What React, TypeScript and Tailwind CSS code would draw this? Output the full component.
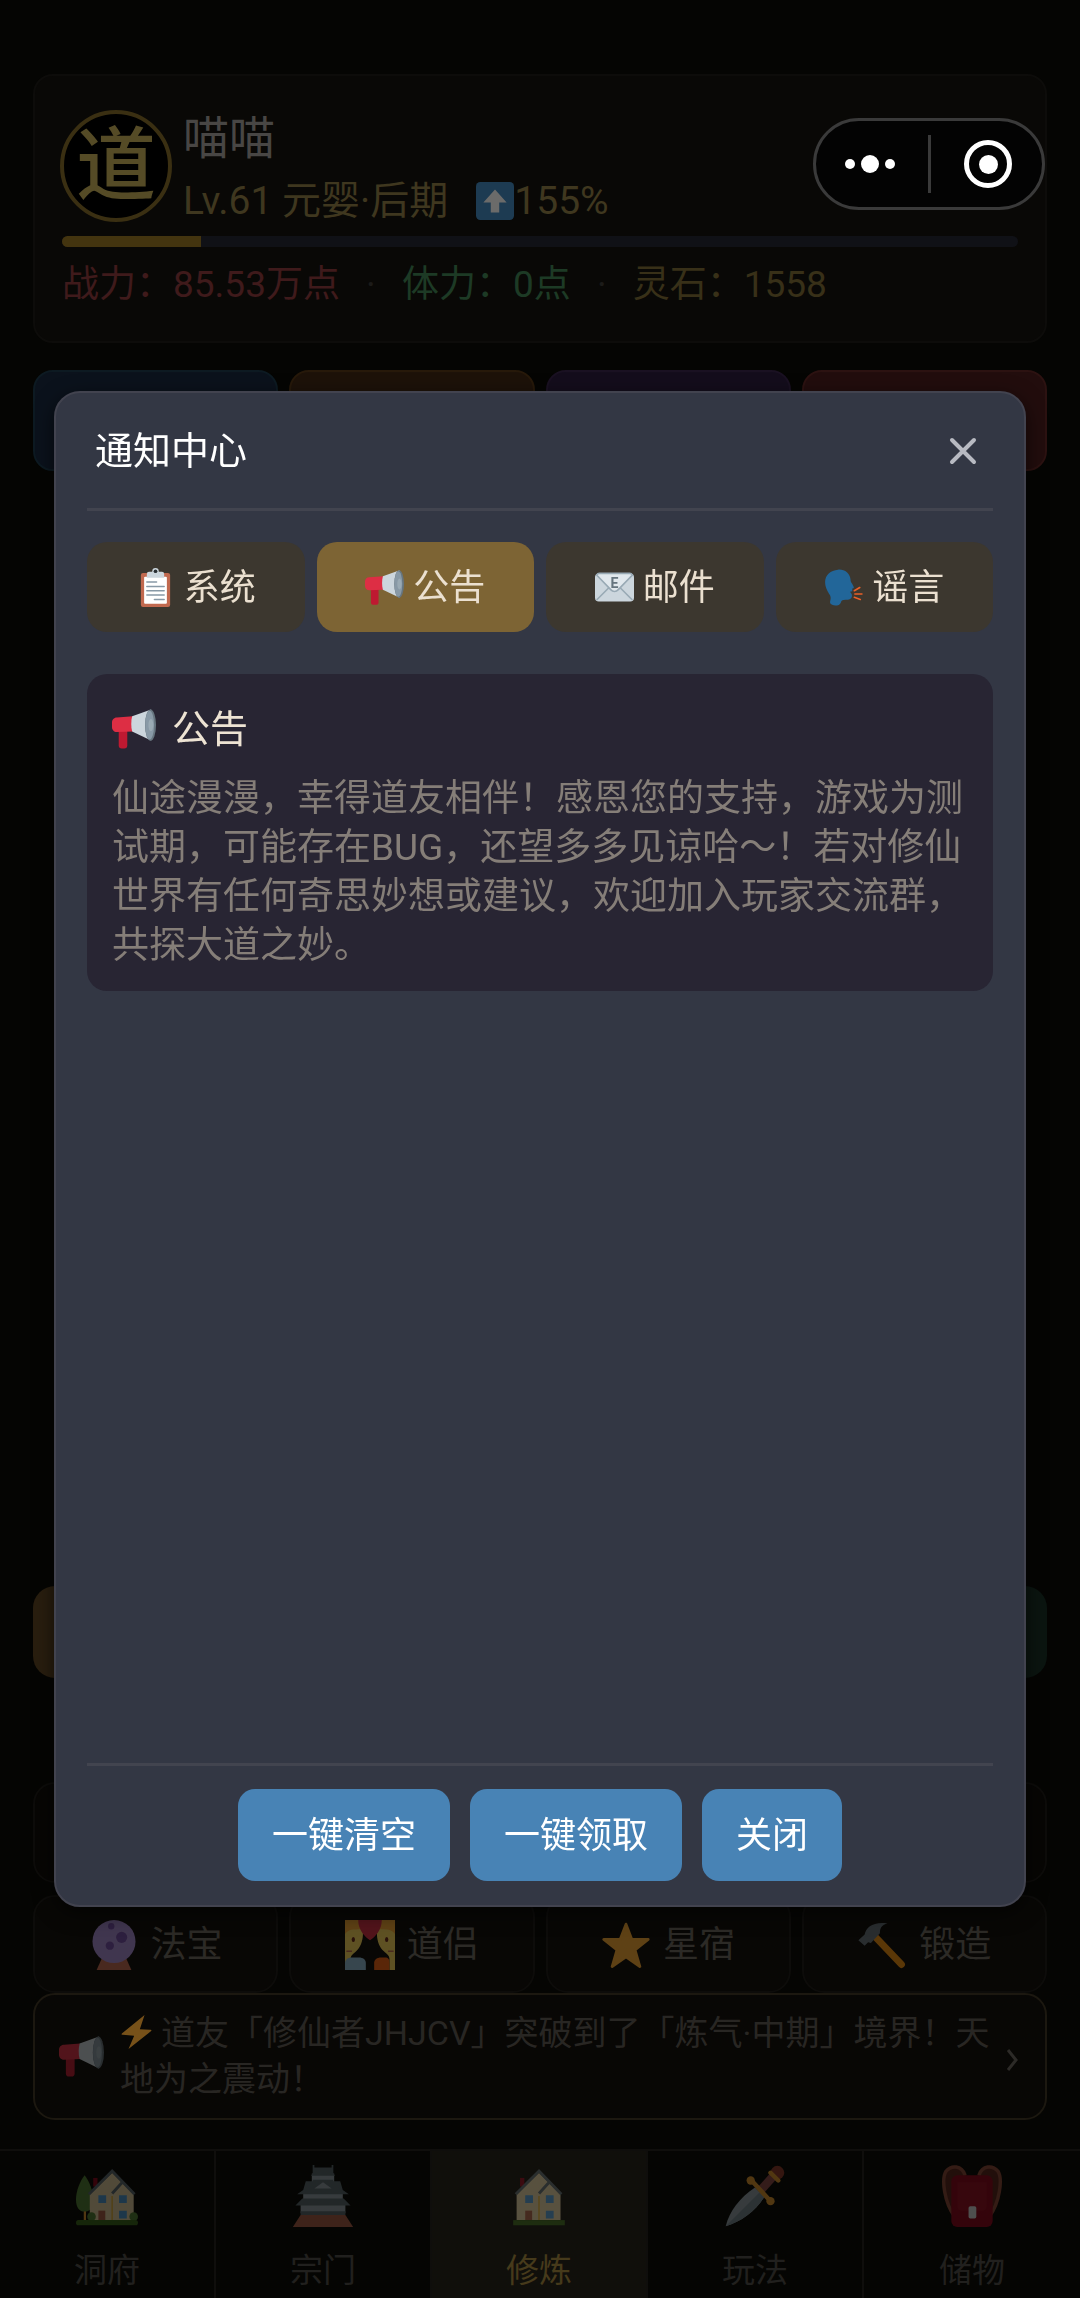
import { useState, type ReactNode } from "react"

type IconProps = { className?: string }

function Emoji({ className, children }: { className?: string; children: ReactNode }) {
  return (
    <svg viewBox="0 0 36 36" className={className} aria-hidden="true">
      {children}
    </svg>
  )
}

function Megaphone({ className }: IconProps) {
  return (
    <Emoji className={className}>
      <path fill="#BE1931" d="M5.500 18h7v13.500a2.500 2.500 0 0 1-2.500 2.500H8a2.500 2.500 0 0 1-2.500-2.500z" />
      <path fill="#DD2E44" d="M4 8.500L17 7.500V20L4 20.500C1.500 20.500 0 18.500 0 16.500v-4C0 10.500 1.500 8.500 4 8.500z" />
      <path fill="#CCD6DD" d="M16.500 7.500L32 2v25.500L16.500 20c-1-3.500-1-9 0-12.500z" />
      <ellipse fill="#66757F" cx="31.500" cy="14.800" rx="4.500" ry="12.800" />
      <ellipse fill="#8899A6" cx="30.800" cy="14.800" rx="3.600" ry="11.800" />
      <ellipse fill="#9AAAB4" cx="31.800" cy="14.800" rx="2" ry="5" />
    </Emoji>
  )
}

function Clipboard({ className }: IconProps) {
  return (
    <Emoji className={className}>
      <rect fill="#C1694F" x="4.500" y="4.500" width="27" height="31.500" rx="2" />
      <rect fill="#FFF" x="7.500" y="8" width="21" height="25" rx="1" />
      <path fill="#CCD6DD" d="M12 3.500h3.500a2.800 2.800 0 0 1 5 0H24A2 2 0 0 1 26 5.500V9H10V5.500a2 2 0 0 1 2-2z" />
      <circle fill="#CCD6DD" cx="18" cy="3" r="3" />
      <circle fill="#292F33" cx="18" cy="3" r="1.700" />
      <path stroke="#8899A6" strokeWidth="1.400" strokeLinecap="round" d="M10 13h9M10 17h16M10 21h16M10 25h16M17 29h9" />
    </Emoji>
  )
}

function Envelope({ className }: IconProps) {
  return (
    <Emoji className={className}>
      <rect fill="#CCD6DD" y="5" width="36" height="26" rx="3.500" />
      <path stroke="#99AAB5" strokeWidth="1.500" fill="none" d="M1.500 29.500L13 18M34.500 29.500L23 18" />
      <path fill="#E1E8ED" stroke="#99AAB5" strokeWidth="1.500" d="M1.500 6.500L14.500 20c2 2.200 5 2.200 7 0L34.500 6.500C34 5.500 33 5 32 5H4C3 5 2 5.500 1.500 6.500z" />
      <text x="18" y="18" textAnchor="middle" fontSize="13" fontWeight="700" fontFamily="Roboto, sans-serif" fill="#66757F">
        E
      </text>
    </Emoji>
  )
}

function SpeakingHead({ className }: IconProps) {
  return (
    <Emoji className={className}>
      <path
        fill="#226699"
        d="M13 1.500C19 1 24 5 24.500 10.500c0 1.500.5 2.500 1.500 4l1.500 3c.3.800-.2 1.300-1.500 1.500l.2 2.500-2.200.5 1.500 2c.5 1 .5 3-.5 4-1.500 1.500-4 1.500-7 1.500-1.500 0-2 1-2.500 2.500-1 2.500-5 3.500-8 2-1.800-.8-2.300-2-1.700-4 .7-2.500.5-4-1.300-6.500C2.500 20.500 1 17 1 13 1 6.500 6 2 13 1.500z"
      />
      <path stroke="#E95F28" strokeWidth="1.500" strokeLinecap="round" d="M28 21l5-3M28.500 24h6.500M28 27l5.500 2" />
    </Emoji>
  )
}

function UpArrow({ className }: IconProps) {
  return (
    <Emoji className={className}>
      <rect fill="#3B88C3" width="36" height="36" rx="4" />
      <path fill="#FFF" d="M18 7l11 12.500h-7V29h-8v-9.500H7z" />
    </Emoji>
  )
}

function CrystalBall({ className }: IconProps) {
  return (
    <Emoji className={className}>
      <path fill="#C1694F" d="M9 28h18l3.500 8h-25z" />
      <circle fill="#AA8DD8" cx="18" cy="15.500" r="15.500" />
      <circle fill="#744EAA" cx="16" cy="4.500" r="2.300" />
      <circle fill="#744EAA" cx="23.500" cy="12.500" r="4" />
      <circle fill="#744EAA" cx="15" cy="18.500" r="3" />
    </Emoji>
  )
}

function Couple({ className }: IconProps) {
  return (
    <Emoji className={className}>
      <path fill="#FFDC5D" d="M0 0h10c4 4 4.500 17-2 22.500-2 2-3.500 2.500-4 5V36H0zM36 0H26c-4 4-4.500 17 2 22.500 2 2 3.500 2.500 4 5V36h4z" />
      <path fill="#FFAC33" d="M0 0h13v6C8 8 4 5 0 10zM36 0H23v6c5 2 9-1 13 4z" />
      <path fill="#DD2E44" d="M9.500 0h17c0 7-4.500 12-8.500 14.500C14 12 9.500 7 9.500 0z" />
      <ellipse fill="#662113" cx="6" cy="14" rx="1.200" ry="1.800" />
      <ellipse fill="#662113" cx="30" cy="14" rx="1.200" ry="1.800" />
      <path stroke="#C1694F" strokeWidth="1" fill="none" d="M1 22.500h4M35 22.500h-4" />
      <path fill="#8EBBD6" d="M0 36v-5c0-2.500 2-4 5-4h5c3 0 5 1.500 5 4v5z" />
      <path fill="#F4620E" d="M21 36v-5c0-2.500 2-4 5-4h3c2 0 3 1 3 4v5z" />
    </Emoji>
  )
}

function Star({ className }: IconProps) {
  return (
    <Emoji className={className}>
      <path
        fill="#FFAC33"
        stroke="#FFAC33"
        strokeWidth="2"
        strokeLinejoin="round"
        d="M18 3l4.200 11H34l-9.500 7.500L28 33.500l-10-7-10 7 3.500-12L2 14h11.800z"
      />
    </Emoji>
  )
}

function Hammer({ className }: IconProps) {
  return (
    <Emoji className={className}>
      <path stroke="#F4900C" strokeWidth="5" strokeLinecap="round" d="M13.500 12.500L32 32" />
      <path fill="#66757F" d="M1 14.500l4.500-4C6.500 5 12 1 22 2.500c-4 1-5.500 3-5.500 7L10 16.500 8 16l-2.500 2.500z" />
    </Emoji>
  )
}

function Bolt({ className }: IconProps) {
  return (
    <Emoji className={className}>
      <path fill="#FFAC33" d="M26 0L2 19.500c-.8 1-.2 1.500 1 1.500l12 1L9 36l24-19c.8-1 .2-1.500-1-1.500l-11-.5z" />
    </Emoji>
  )
}

function HouseBody() {
  return (
    <>
      <path fill="#A0041E" d="M10 7.500h2.500v5H10z" />
      <path fill="#FFE8B6" d="M8 17L21 4.500 33.500 17v15H8z" />
      <path fill="#FFCC4D" d="M20.500 18h1v14h-1z" />
      <path stroke="#66757F" strokeWidth="1.700" fill="none" d="M7.500 17L21 3.500 34 17M21 16.500l5.500-6" />
      <path fill="#55ACEE" d="M13 17.500h4.500V22H13zM25 17.500h4.500V22H25zM25 26.500h4.500V31H25z" />
      <path fill="#C1694F" d="M13 26.500h4V32h-4z" />
    </>
  )
}

function HouseGarden({ className }: IconProps) {
  return (
    <Emoji className={className}>
      <path fill="#FFAC33" d="M4.500 24h1.300v9H4.500z" />
      <path fill="#5C913B" d="M5 6c2.500 3 5 9 5 14s-2 7-5 7-5-2-5-7S2.500 9 5 6z" />
      <HouseBody />
      <circle fill="#5C913B" cx="9" cy="30" r="2.500" />
      <circle fill="#5C913B" cx="33.500" cy="30" r="2.500" />
      <rect fill="#3E721D" x="0" y="32" width="36" height="3" rx="1.500" />
    </Emoji>
  )
}

function House({ className }: IconProps) {
  return (
    <svg viewBox="3 0 36 36" className={className} aria-hidden="true">
      <HouseBody />
      <rect fill="#3E721D" x="6" y="32" width="30" height="3" />
    </svg>
  )
}

function Castle({ className }: IconProps) {
  return (
    <Emoji className={className}>
      <path fill="#C1694F" d="M5 29h26l4.500 7H.5z" />
      <path fill="#AAB8C2" d="M5 22h26v6H5zM6.500 15h23v6h-23zM11.500 5h13v6h-13z" />
      <path fill="#66757F" d="M5 26.800h26V29H5zM12 0h1v1.500h10V0h1v5l1 1.200H11L12 5z" />
      <path fill="#66757F" d="M8 9.500h4v-1h12v1h4l1.500 5 3.500 2.500H3L6.500 14.500zM6 19.500h24l4 4H2z" />
      <path fill="#AAB8C2" d="M18 10l5 3.700H13z" />
    </Emoji>
  )
}

function Dagger({ className }: IconProps) {
  return (
    <Emoji className={className}>
      <path fill="#AAB8C2" d="M1 35.500C3 27 9 19 18 13l5.500 5.500C18 27 10 33 1 35.500z" />
      <path fill="#8899A6" d="M1 35.500L21 15.500l2.500 3C18 27 10 33 1 35.500z" />
      <path stroke="#A0514F" strokeWidth="5" d="M21.500 14.500l8-9" />
      <circle fill="#A0402F" cx="31" cy="4.500" r="4" />
      <path stroke="#FFAC33" strokeWidth="2.600" strokeLinecap="round" d="M16 9l11 12M27 4.500l4.500 4.500" />
      <circle fill="#FFAC33" cx="15.500" cy="9" r="2.400" />
      <circle fill="#FFAC33" cx="27" cy="21" r="2.400" />
    </Emoji>
  )
}

function Backpack({ className }: IconProps) {
  return (
    <Emoji className={className}>
      <path fill="#66281F" d="M8 31C2 23-1 8 2.500 3 5-1 13-1 15 7v24zM28 31c6-8 9-23 5.500-28C31-1 23-1 21 7v24z" />
      <path stroke="#A0513F" strokeWidth="2" fill="none" d="M8 30C2 22 0 8 3 3.500 6 0 12 0 14 6M28 30c6-8 8-22 5-26.500C30 0 24 0 22 6" />
      <rect fill="#A0041E" x="6" y="6" width="24" height="30" rx="3.500" />
      <path fill="#BE1931" d="M9.500 10h17v14a2.500 2.500 0 0 1-2.500 2.500H12A2.500 2.500 0 0 1 9.500 24z" opacity=".4" />
      <rect fill="#F5F8FA" x="16" y="24" width="4.500" height="7" rx="1" />
    </Emoji>
  )
}

const tabs = [
  { name: "系统", icon: Clipboard },
  { name: "公告", icon: Megaphone },
  { name: "邮件", icon: Envelope },
  { name: "谣言", icon: SpeakingHead },
]

const tools = [
  { name: "法宝", icon: CrystalBall },
  { name: "道侣", icon: Couple },
  { name: "星宿", icon: Star },
  { name: "锻造", icon: Hammer },
]

const navItems = [
  { name: "洞府", icon: HouseGarden },
  { name: "宗门", icon: Castle },
  { name: "修炼", icon: House, active: true },
  { name: "玩法", icon: Dagger },
  { name: "储物", icon: Backpack },
]

function Capsule() {
  return (
    <div className="absolute top-[118px] right-[35px] z-20 flex h-[92px] w-[232px] items-center rounded-full border-3 border-[#3a3a3a] bg-[#030303]">
      <button aria-label="更多" className="flex flex-1 items-center justify-center gap-[6px] pr-[4px]">
        <span className="size-[10px] rounded-full bg-white" />
        <span className="size-[18px] rounded-full bg-white" />
        <span className="size-[10px] rounded-full bg-white" />
      </button>
      <span className="h-[58px] w-[3px] bg-[#3a3a3a]" />
      <button aria-label="退出" className="flex flex-1 items-center justify-center pl-[4px]">
        <span className="flex size-[48px] items-center justify-center rounded-full border-5 border-white">
          <span className="size-[19px] rounded-full bg-white" />
        </span>
      </button>
    </div>
  )
}

function PlayerCard() {
  return (
    <header className="rounded-[20px] border-2 border-[#0d0c0a] bg-[#090806] px-[25px] pt-[34px] pb-[29px]">
      <div className="flex gap-[11px]">
        <div className="flex size-[112px] shrink-0 items-center justify-center rounded-full border-4 border-[#3a2f12] bg-black text-[80px] leading-none font-medium text-[#554b26]">
          道
        </div>
        <div className="flex flex-col">
          <p className="text-[46px] leading-[56px] text-[#484644]">喵喵</p>
          <p className="flex items-center text-[39px] leading-[70px] text-[#3f371f]">
            <span>Lv.61 元婴·后期</span>
            <UpArrow className="ml-[28px] size-[38px] opacity-40" />
            <span>155%</span>
          </p>
        </div>
      </div>
      <div className="mx-[2px] h-[11px] overflow-hidden rounded-full bg-[#101116]">
        <div className="h-full w-[14.5%] bg-[#43340f]" />
      </div>
      <p className="mx-[2px] mt-[11px] flex items-center text-[37px] leading-[54px]">
        <span className="text-[#3f1a1b]">战力：85.53万点</span>
        <span className="w-[62px] text-center text-[#1c1b19]">·</span>
        <span className="text-[#1d3a25]">体力：0点</span>
        <span className="w-[62px] text-center text-[#1c1b19]">·</span>
        <span className="text-[#383018]">灵石：1558</span>
      </p>
    </header>
  )
}

function NoticeDialog() {
  const [current, setCurrent] = useState("公告")

  return (
    <div className="fixed inset-0 z-10 flex items-center justify-center">
      <section
        role="dialog"
        aria-label="通知中心"
        className="flex h-[66vh] w-[90vw] flex-col rounded-[26px] border-2 border-[#42434f] bg-[#333744] px-[31px] shadow-[0_6px_20px_0_rgba(0,0,0,0.6)]"
      >
        <div className="flex items-center justify-between border-b-3 border-[#42444f] px-[8px] pt-[29px] pb-[28px]">
          <h2 className="text-[38px] leading-[58px] text-white">通知中心</h2>
          <button aria-label="关闭通知" className="flex size-[44px] items-center justify-center">
            <svg viewBox="0 0 28 28" className="size-[28px]" aria-hidden="true">
              <path stroke="#b8bac2" strokeWidth="4" strokeLinecap="round" d="M3 3l22 22M25 3L3 25" />
            </svg>
          </button>
        </div>

        <div role="tablist" className="mt-[31px] grid grid-cols-4 gap-[12px]">
          {tabs.map(({ name, icon: Icon }) => (
            <button
              key={name}
              role="tab"
              aria-selected={current === name}
              onClick={() => setCurrent(name)}
              className={`flex h-[90px] items-center justify-center gap-[9px] rounded-[20px] pt-[2px] text-[36px] text-[#ebe0d0] ${
                current === name ? "bg-[#7d6434]" : "bg-[#3c372f]"
              }`}
            >
              <Icon className="size-[39px]" />
              {name}
            </button>
          ))}
        </div>

        <div className="flex-1 pt-[42px]">
          <article className="rounded-[20px] bg-[#282533] px-[25px] pt-[27px] pb-[21px]">
            <h3 className="flex items-center gap-[16px] text-[38px] leading-[56px] text-[#ede3d3]">
              <Megaphone className="size-[44px]" />
              公告
            </h3>
            <p className="mt-[17px] text-[37px] leading-[49px] text-[#857e78]">
              仙途漫漫，幸得道友相伴！感恩您的支持，游戏为测试期，可能存在BUG，还望多多见谅哈～！若对修仙世界有任何奇思妙想或建议，欢迎加入玩家交流群，共探大道之妙。
            </p>
          </article>
        </div>

        <footer className="flex justify-center gap-[20px] border-t-3 border-[#42444f] pt-[23px] pb-[24px] text-[36px] text-white">
          <button className="h-[92px] rounded-[17px] bg-[#4883b5] px-[34px] pt-[2px]">一键清空</button>
          <button className="h-[92px] rounded-[17px] bg-[#4883b5] px-[34px] pt-[2px]">一键领取</button>
          <button className="h-[92px] rounded-[17px] bg-[#4883b5] px-[34px] pt-[2px]">关闭</button>
        </footer>
      </section>
    </div>
  )
}

export default function App() {
  return (
    <div className="relative flex min-h-screen flex-col bg-[#050503] font-[Roboto,'Noto_Sans_CJK_SC',sans-serif]">
      <main className="flex flex-1 flex-col px-[33px] pt-[74px]">
        <PlayerCard />

        <div className="mt-[27px] grid grid-cols-4 gap-[11px]">
          <div className="h-[101px] rounded-[20px] border-2 border-[#0d1a22] bg-[#0b121c]" />
          <div className="h-[101px] rounded-[20px] border-2 border-[#27190a] bg-[#1d1209]" />
          <div className="h-[101px] rounded-[20px] border-2 border-[#1a1122] bg-[#140d1c]" />
          <div className="h-[101px] rounded-[20px] border-2 border-[#2c1211] bg-[#220d0d]" />
        </div>

        <div className="mt-auto grid grid-cols-2 gap-[11px]">
          <div className="h-[92px] rounded-[22px] bg-[#291e0f]" />
          <div className="h-[92px] rounded-[22px] bg-[#0b1510]" />
        </div>

        <div className="mt-[104px] grid grid-cols-4 gap-[11px]">
          {tools.map(({ name }) => (
            <div key={name} className="h-[101px] rounded-[22px] border-2 border-[#0d0c0a] bg-[#070604]" />
          ))}
        </div>

        <div className="mt-[12px] grid grid-cols-4 gap-[11px]">
          {tools.map(({ name, icon: Icon }) => (
            <button
              key={name}
              className="flex h-[98px] items-center justify-center gap-[12px] rounded-[22px] border-2 border-[#0d0c0a] bg-[#080705] pt-[2px] text-[36px] text-[#2c2a26]"
            >
              <Icon className="size-[50px] opacity-35" />
              {name}
            </button>
          ))}
        </div>

        <button className="flex items-center rounded-[22px] border-2 border-[#1c1810] bg-[#080705] pt-[15px] pr-[26px] pb-[16px] pl-[24px] text-left text-[34px] leading-[46px] text-[#282623]">
          <Megaphone className="size-[45px] shrink-0 opacity-35" />
          <span className="ml-[16px] flex-1">
            <Bolt className="mr-[7px] inline-block size-[34px] align-[-4px] opacity-45" />
            道友「修仙者JHJCV」突破到了「炼气·中期」境界！天地为之震动！
          </span>
          <svg viewBox="0 0 14 22" className="mt-[8px] h-[22px] w-[14px] shrink-0" aria-hidden="true">
            <path stroke="#2c2a27" strokeWidth="3" fill="none" d="M3 1l8 10-8 10" />
          </svg>
        </button>
      </main>

      <nav className="mt-[29px] grid grid-cols-5 divide-x-2 divide-[#0f0e0c] border-t-2 border-[#0f0e0c]">
        {navItems.map(({ name, icon: Icon, active }) => (
          <a
            key={name}
            href="#"
            className={`flex h-[147px] flex-col items-center pt-[14px] text-[33px] leading-[48px] ${
              active ? "bg-[#100f0b] text-[#463a1b]" : "text-[#21201e]"
            }`}
          >
            <Icon className="mb-[20px] size-[62px] opacity-30" />
            {name}
          </a>
        ))}
      </nav>

      <Capsule />
      <NoticeDialog />
    </div>
  )
}
